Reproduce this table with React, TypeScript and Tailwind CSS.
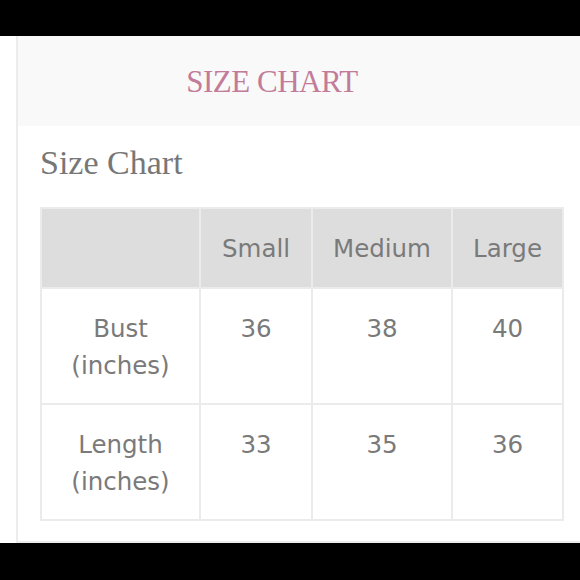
const sizes = ['Small', 'Medium', 'Large'];

const rows = [
  { label: ['Bust', '(inches)'], values: ['36', '38', '40'] },
  { label: ['Length', '(inches)'], values: ['33', '35', '36'] },
];

export default function App() {
  return (
    <div className="w-[580px] h-[580px] bg-black flex flex-col">
      <div className="h-[36px] shrink-0 bg-black" />
      <div className="h-[507px] shrink-0 bg-white pl-[16px]">
        <div className="h-full border-l-2 border-b-2 border-[#ececec] flex flex-col">
          <div className="h-[90px] shrink-0 bg-[#f9f9f9] flex items-center justify-center pr-[54px]">
            <h1 className="font-['Liberation_Serif',serif] text-[31px] leading-none tracking-[-0.5px] text-[#c27c99]">SIZE CHART</h1>
          </div>
          <div className="pl-[22px]">
            <h2 className="mt-[20px] font-['Liberation_Serif',serif] text-[34px] leading-[34px] text-[#777777]">Size Chart</h2>
            <table className="mt-[27px] w-[522px] table-fixed border-collapse font-['DejaVu_Sans',sans-serif] text-[24.5px] leading-[37px] text-[#7a7a7a] text-center">
              <colgroup>
                <col className="w-[159px]" />
                <col className="w-[112px]" />
                <col className="w-[140px]" />
                <col className="w-[111px]" />
              </colgroup>
              <thead>
                <tr className="h-[80px] bg-[#dddddd]">
                  <th className="border-2 border-[#ebebeb] font-normal" />
                  {sizes.map(s => (
                    <th key={s} className="border-2 border-[#ebebeb] font-normal align-top pt-[21px]">{s}</th>
                  ))}
                </tr>
              </thead>
              <tbody>
                {rows.map(r => (
                  <tr key={r.label[0]} className="h-[116px]">
                    <td className="border-2 border-[#ebebeb] align-top pt-[21px]">
                      {r.label[0]}<br />{r.label[1]}
                    </td>
                    {r.values.map((v, i) => (
                      <td key={i} className="border-2 border-[#ebebeb] align-top pt-[21px]">{v}</td>
                    ))}
                  </tr>
                ))}
              </tbody>
            </table>
          </div>
        </div>
      </div>
      <div className="flex-1 bg-black" />
    </div>
  );
}
